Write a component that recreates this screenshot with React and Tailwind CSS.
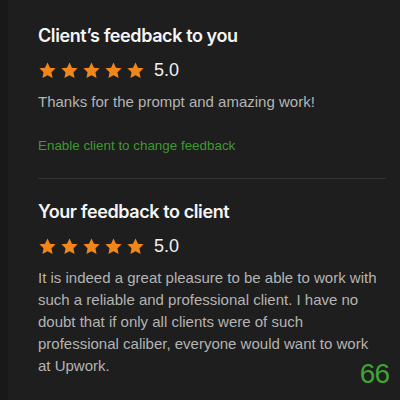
import React from 'react';

const Star = () => (
  <svg viewBox="0 0 24 24" className="w-[19px] h-[19px]" fill="#f0861c">
    <path d="M12 1.8l3.1 6.6 7.2.9-5.3 5 1.4 7.1L12 17.9l-6.4 3.5L7 14.3l-5.3-5 7.2-.9z" />
  </svg>
);

const Rating = ({ value }) => (
  <div className="flex items-center">
    <div className="flex gap-[3px]">
      {[0, 1, 2, 3, 4].map((i) => (
        <Star key={i} />
      ))}
    </div>
    <span className="ml-[9px] text-[18px] text-[#f2f2f2]">{value}</span>
  </div>
);

const App = () => {
  return (
    <div className="relative w-[400px] h-[400px] flex bg-[#1e1e1e] overflow-hidden font-['Liberation_Sans',Arial,sans-serif]">
      <div className="w-[8px] bg-[#191919]" />
      <div className="flex-1 pl-[30px] pr-[14px]">
        {/* Client side */}
        <h2 className="mt-[25px] text-[18px] leading-[22px] font-semibold tracking-[-0.4px] text-[#f5f5f5] font-['Inter',sans-serif]">
          Client’s feedback to you
        </h2>
        <div className="mt-[10px]">
          <Rating value="5.0" />
        </div>
        <p className="mt-[8px] text-[15px] leading-[20px] text-[#b4b4b4]">
          Thanks for the prompt and amazing work!
        </p>
        <p className="mt-[25px] text-[13.4px] leading-[18px] text-[#3d9a2f]">
          Enable client to change feedback
        </p>
        <div className="mt-[23px] h-px bg-[#333333]" />

        {/* Freelancer side */}
        <h2 className="mt-[22px] text-[18px] leading-[22px] font-semibold tracking-[-0.4px] text-[#f5f5f5] font-['Inter',sans-serif]">
          Your feedback to client
        </h2>
        <div className="mt-[10px]">
          <Rating value="5.0" />
        </div>
        <div className="mt-[7px] w-[344px] text-[15px] leading-[22px] text-[#b4b4b4]">
          <span>
            It is indeed a great pleasure to be able to work with such a reliable and professional client. I have no doubt that if only all clients were of such professional caliber, everyone would want to work at Upwork.
          </span>
        </div>
      </div>
      <span className="absolute right-[11px] bottom-[12px] text-[28px] leading-none tracking-[-1px] text-[#3fa336]">
        66
      </span>
    </div>
  );
};

export default App;
